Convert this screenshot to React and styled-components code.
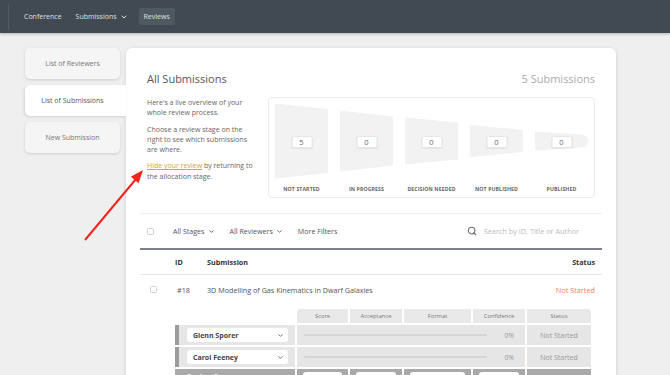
import React from "react";
import styled, { createGlobalStyle } from "styled-components";
import { ChevronDown, Search } from "lucide-react";

const GlobalStyle = createGlobalStyle`
  * { box-sizing: border-box; }
  body {
    margin: 0;
    background: #efefef;
    font-family: "Open Sans", "Noto Sans", sans-serif;
  }
`;

const Page = styled.div`
  position: relative;
  width: 670px;
  height: 375px;
  overflow: hidden;
  background: #efefef;
`;

const TopNav = styled.nav`
  height: 33px;
  background: #414a52;
  display: flex;
  align-items: center;
  padding-left: 8px;
  box-shadow: 0 1px 3px rgba(0, 0, 0, 0.25);
  position: relative;
  z-index: 3;
`;

const NavSep = styled.div`
  width: 1px;
  height: 26px;
  background: rgba(255, 255, 255, 0.1);
  margin-right: 9px;
`;

const NavItem = styled.div`
  display: flex;
  align-items: center;
  gap: 3px;
  height: 17px;
  padding: 0 ${(p) => (p.$active ? "5px" : "6px")};
  margin-left: ${(p) => (p.$active ? "3px" : "0")};
  margin-right: 2px;
  border-radius: 2px;
  font-size: 7px;
  color: #dde1e4;
  background: ${(p) => (p.$active ? "#4f5961" : "transparent")};
`;

const Body = styled.div`
  display: flex;
  align-items: flex-start;
  padding: 15px 0 0 25px;
`;

const Sidebar = styled.div`
  width: 101px;
  display: flex;
  flex-direction: column;
  gap: 6px;
  position: relative;
  z-index: 2;
`;

const Tab = styled.div`
  width: ${(p) => (p.$active ? "101px" : "95px")};
  height: 31px;
  display: flex;
  align-items: center;
  justify-content: ${(p) => (p.$active ? "flex-start" : "center")};
  font-size: 7px;
  color: ${(p) => (p.$active ? "#555" : "#777")};
  background: ${(p) => (p.$active ? "#fff" : "#f5f5f5")};
  border-radius: ${(p) => (p.$active ? "5px 0 0 5px" : "5px")};
  box-shadow: ${(p) =>
    p.$active ? "-1px 1px 3px rgba(0,0,0,0.12)" : "0 1px 3px rgba(0,0,0,0.14)"};

  span {
    width: 95px;
    text-align: center;
  }
`;

const Panel = styled.main`
  width: 490px;
  height: 400px;
  background: #fff;
  border-radius: 6px;
  box-shadow: 0 1px 4px rgba(0, 0, 0, 0.14);
  padding: 0 14px;
  position: relative;
  z-index: 1;
`;

const Intro = styled.section`
  padding: 0 7px;
`;

const TitleRow = styled.div`
  display: flex;
  justify-content: space-between;
  align-items: center;
  margin-top: 21px;
  height: 18px;
`;

const Title = styled.h1`
  margin: 0;
  font-size: 11px;
  font-weight: 400;
  color: #555;
`;

const Count = styled.span`
  font-size: 11px;
  color: #aaa;
`;

const Overview = styled.div`
  display: flex;
  justify-content: space-between;
  margin-top: 10px;
`;

const Description = styled.div`
  width: 108px;
  padding-top: 1px;
  font-size: 7px;
  line-height: 10.3px;
  color: #666;

  p {
    margin: 0 0 6px;
  }

  a {
    color: #d5a244;
    text-decoration: underline;
  }
`;

const Funnel = styled.div`
  width: 327px;
  height: 101px;
  border: 1px solid #ececec;
  border-radius: 4px;
  display: flex;
`;

const Stage = styled.div`
  position: relative;
  width: 65px;
  display: flex;
  flex-direction: column;
  align-items: center;
`;

const StageCount = styled.div`
  position: absolute;
  top: 38px;
  left: 50%;
  transform: translateX(-50%);
  width: 21px;
  height: 12px;
  background: #fff;
  border: 1px solid #e6e6e6;
  border-radius: 2px;
  box-shadow: 0 1px 1px rgba(0, 0, 0, 0.06);
  font-size: 7.5px;
  line-height: 10px;
  text-align: center;
  color: #666;
`;

const StageLabel = styled.div`
  font-size: 5.2px;
  font-weight: 700;
  color: #666;
  letter-spacing: 0.1px;
  line-height: 8px;
  white-space: nowrap;
`;

const FilterBar = styled.div`
  margin-top: 15px;
  height: 37px;
  border-top: 1px solid #eeeeee;
  border-bottom: 2px solid #7c8287;
  display: flex;
  align-items: center;
  padding: 0 23px 0 7px;
`;

const Check = styled.span`
  display: inline-block;
  width: 7px;
  height: 7px;
  border: 1px solid #cfcfcf;
  border-radius: 1.5px;
  background: #fff;
`;

const Filter = styled.div`
  display: flex;
  align-items: center;
  gap: 3px;
  margin-left: ${(p) => p.$gap || "15px"};
  font-size: 7.1px;
  color: #555;
`;

const SearchBox = styled.div`
  margin-left: auto;
  display: flex;
  align-items: center;
  gap: 7px;
  font-size: 7.3px;
  color: #bbb;
`;

const HeadRow = styled.div`
  height: 25px;
  display: flex;
  align-items: center;
  padding: 0 7px 0 35px;
  border-bottom: 1px solid #e6e6e6;
  font-size: 7.2px;
  font-weight: 700;
  color: #333;
`;

const IdCol = styled.div`
  width: 32px;
  padding-left: ${(p) => p.$pad || "0"};
`;

const Grow = styled.div`
  flex: 1;
`;

const SubRow = styled.div`
  height: 29px;
  display: flex;
  align-items: center;
  padding: 0 7px;
  font-size: 7.2px;
  color: #555;
`;

const RowCheck = styled.div`
  width: 28px;
  display: flex;
  padding-left: 3px;
`;

const Status = styled.div`
  color: #f08262;
  font-size: 7.3px;
`;

const Reviews = styled.div`
  margin: 5px 0 0 35px;
  display: grid;
  grid-template-columns: 120px 51px 52px 67px 52px 64px;
  gap: 2px;
`;

const HeadCell = styled.div`
  height: 14px;
  background: #e9e9e9;
  font-size: 5.8px;
  color: #777;
  display: flex;
  align-items: center;
  justify-content: center;
  border-radius: ${(p) => p.$radius || "0"};
`;

const NameCell = styled.div`
  height: 20px;
  background: ${(p) => (p.$summary ? "#a9a9a9" : "#e6e6e6")};
  border-left: 4px solid ${(p) => (p.$summary ? "#a9a9a9" : "#9b9b9b")};
  padding: 3px 7px 3px 8px;
  font-size: 7px;
  font-weight: 700;
  color: #f4f4f4;
`;

const Select = styled.div`
  height: 14px;
  background: #fff;
  border-radius: 3px;
  display: flex;
  align-items: center;
  justify-content: space-between;
  padding: 0 4px 0 6px;
  font-size: 7px;
  font-weight: 700;
  color: #444;
`;

const ProgressCell = styled.div`
  grid-column: span 4;
  background: #e6e6e6;
  display: flex;
  align-items: center;
  padding: 0 11px 0 7px;
  gap: 17px;
  font-size: 6.8px;
  color: #999;
`;

const Bar = styled.div`
  flex: 1;
  height: 2px;
  border-radius: 1px;
  background: #d5d5d5;
`;

const StatusCell = styled.div`
  background: ${(p) => (p.$summary ? "#a9a9a9" : "#e6e6e6")};
  display: flex;
  align-items: center;
  justify-content: center;
  font-size: 7px;
  color: #999;
`;

const SummaryCell = styled.div`
  height: 20px;
  background: #a9a9a9;
  padding: 3px 6px;
`;

const SummaryInput = styled.div`
  height: 100%;
  background: #fff;
  border-radius: 3px;
`;

const Pointer = styled.svg`
  position: absolute;
  left: 80px;
  top: 165px;
  pointer-events: none;
  z-index: 5;
`;

const stages = [
  { count: 5, label: "NOT STARTED", l: 37.5, r: 32 },
  { count: 0, label: "IN PROGRESS", l: 30.5, r: 24.5 },
  { count: 0, label: "DECISION NEEDED", l: 23.5, r: 18.5 },
  { count: 0, label: "NOT PUBLISHED", l: 16, r: 11 },
  { count: 0, label: "PUBLISHED", l: 9.5, r: 6.5, tip: true },
];

const FunnelShape = ({ l, r, tip }) => {
  const cy = 43;
  const d = tip
    ? `M6 ${cy - l} L52.5 ${cy - r} A${r} ${r} 0 0 1 52.5 ${cy + r} L6 ${cy + l} Z`
    : `M6 ${cy - l} L59 ${cy - r} L59 ${cy + r} L6 ${cy + l} Z`;
  return (
    <svg width="65" height="87" viewBox="0 0 65 87">
      <path d={d} fill="#f2f2f2" />
    </svg>
  );
};

const reviewers = ["Glenn Sporer", "Carol Feeney"];

export default function App() {
  return (
    <Page>
      <GlobalStyle />
      <TopNav>
        <NavSep />
        <NavItem>Conference</NavItem>
        <NavItem>
          Submissions <ChevronDown size={8} strokeWidth={3} />
        </NavItem>
        <NavItem $active>Reviews</NavItem>
      </TopNav>

      <Body>
        <Sidebar>
          <Tab>List of Reviewers</Tab>
          <Tab $active>
            <span>List of Submissions</span>
          </Tab>
          <Tab>New Submission</Tab>
        </Sidebar>

        <Panel>
          <Intro>
            <TitleRow>
              <Title>All Submissions</Title>
              <Count>5 Submissions</Count>
            </TitleRow>
            <Overview>
              <Description>
                <p>Here's a live overview of your whole review process.</p>
                <p>Choose a review stage on the right to see which submissions are where.</p>
                <p>
                  <a>Hide your review</a> by returning to the allocation stage.
                </p>
              </Description>
              <Funnel>
                {stages.map((s) => (
                  <Stage key={s.label}>
                    <FunnelShape l={s.l} r={s.r} tip={s.tip} />
                    <StageCount>{s.count}</StageCount>
                    <StageLabel>{s.label}</StageLabel>
                  </Stage>
                ))}
              </Funnel>
            </Overview>
          </Intro>

          <FilterBar>
            <Check />
            <Filter $gap="19px">
              All Stages <ChevronDown size={7} strokeWidth={3} />
            </Filter>
            <Filter>
              All Reviewers <ChevronDown size={7} strokeWidth={3} />
            </Filter>
            <Filter>More Filters</Filter>
            <SearchBox>
              <Search size={10} strokeWidth={2.6} color="#6f6f6f" />
              Search by ID, Title or Author
            </SearchBox>
          </FilterBar>

          <HeadRow>
            <IdCol>ID</IdCol>
            <Grow>Submission</Grow>
            <div>Status</div>
          </HeadRow>

          <SubRow>
            <RowCheck>
              <Check />
            </RowCheck>
            <IdCol $pad="2px">#18</IdCol>
            <Grow>3D Modelling of Gas Kinematics in Dwarf Galaxies</Grow>
            <Status>Not Started</Status>
          </SubRow>

          <Reviews>
            <div />
            <HeadCell $radius="3px 0 0 0">Score</HeadCell>
            <HeadCell>Acceptance</HeadCell>
            <HeadCell>Format</HeadCell>
            <HeadCell>Confidence</HeadCell>
            <HeadCell $radius="0 3px 0 0">Status</HeadCell>

            {reviewers.map((name) => (
              <React.Fragment key={name}>
                <NameCell>
                  <Select>
                    {name}
                    <ChevronDown size={7} strokeWidth={3} color="#666" />
                  </Select>
                </NameCell>
                <ProgressCell>
                  <Bar />
                  0%
                </ProgressCell>
                <StatusCell>Not Started</StatusCell>
              </React.Fragment>
            ))}

            <NameCell $summary>Review Summary</NameCell>
            <SummaryCell>
              <SummaryInput />
            </SummaryCell>
            <SummaryCell>
              <SummaryInput />
            </SummaryCell>
            <SummaryCell>
              <SummaryInput />
            </SummaryCell>
            <SummaryCell>
              <SummaryInput />
            </SummaryCell>
            <StatusCell $summary />
          </Reviews>
        </Panel>
      </Body>

      <Pointer width="70" height="80" viewBox="0 0 70 80">
        <line x1="5" y1="75" x2="56" y2="14" stroke="#f2241b" strokeWidth="2" />
        <polygon points="63,5 58.6,18.2 50.8,11.8" fill="#f2241b" />
      </Pointer>
    </Page>
  );
}
